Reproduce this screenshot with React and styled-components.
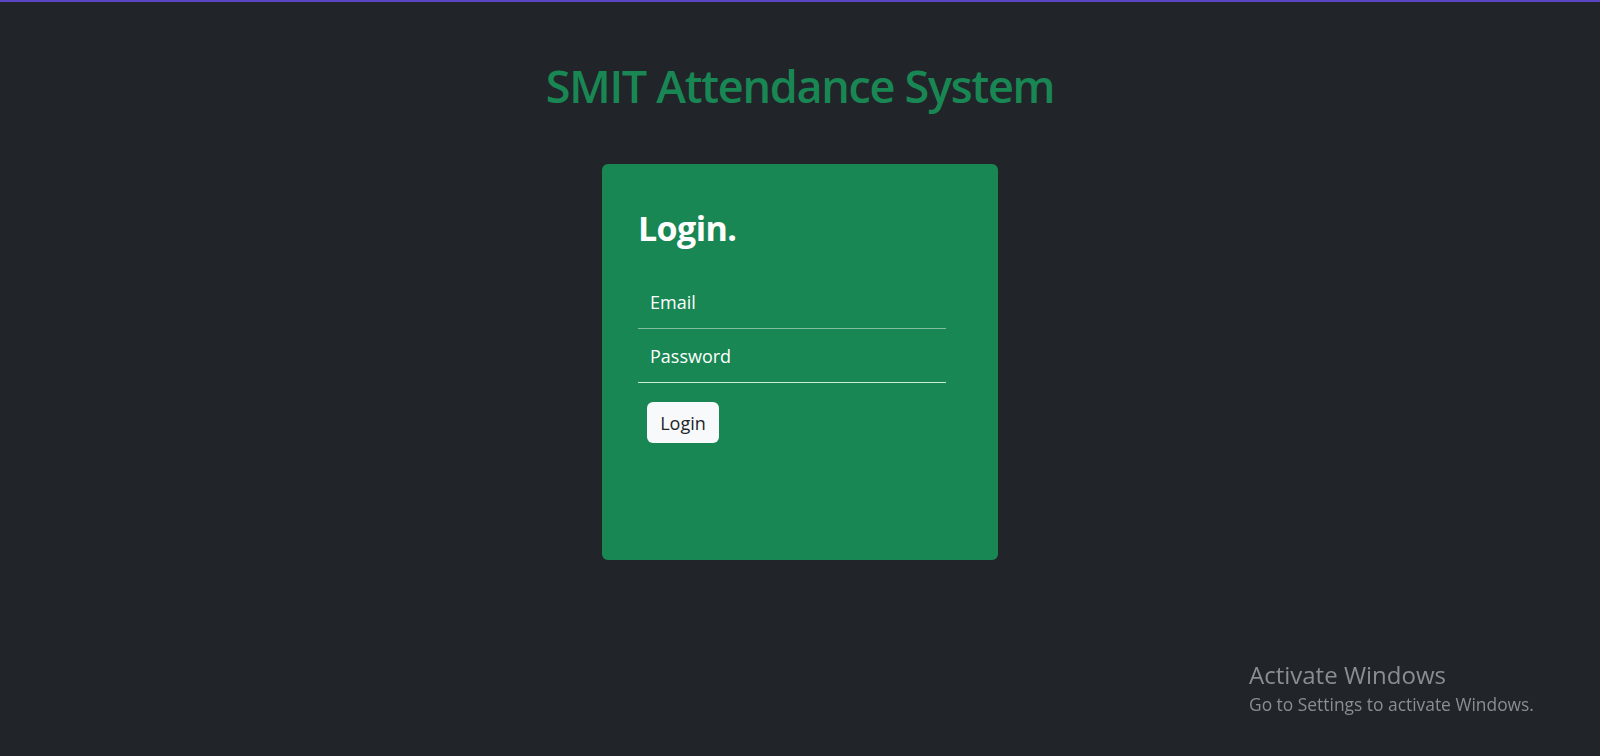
import React from "react";
import styled, { createGlobalStyle } from "styled-components";

const Global = createGlobalStyle`
  html, body { margin: 0; padding: 0; background: #212529; }
  body { font-family: "Open Sans", "Noto Sans", sans-serif; color: #fff; }
  * { box-sizing: border-box; }
`;

const Page = styled.div`
  min-height: 756px;
  display: flex;
  flex-direction: column;
  align-items: center;
  border-top: 2px solid #5a45c3;
`;

const Title = styled.h1`
  margin: 56px 0 0;
  font-size: 45px;
  line-height: 56px;
  font-weight: 600;
  color: #198754;
  letter-spacing: -1.3px;
`;

const Card = styled.div`
  margin-top: 50px;
  width: 396px;
  height: 396px;
  background: #198754;
  border-radius: 6px;
  padding: 38px 36px;
  display: flex;
  flex-direction: column;
  align-items: flex-start;
`;

const Heading = styled.h2`
  margin: 5px 0 0;
  font-size: 34px;
  line-height: 42px;
  font-weight: 700;
  letter-spacing: -0.6px;
  color: #fff;
`;

const Form = styled.form`
  margin-top: 26px;
  display: flex;
  flex-direction: column;
  align-items: flex-start;
`;

const Field = styled.input`
  width: 308px;
  height: 54px;
  padding: 0 12px;
  border: none;
  border-bottom: 1px solid ${(p) => p.$line};
  background: transparent;
  color: #fff;
  font-family: inherit;
  font-size: 18px;
  outline: none;
  &::placeholder { color: #fff; opacity: 1; }
`;

const Button = styled.button`
  margin: 19px 0 0 9px;
  width: 72px;
  height: 41px;
  border: none;
  border-radius: 6px;
  background: #f8f9fa;
  color: #212529;
  font-family: inherit;
  font-size: 18px;
  padding: 0;
  cursor: pointer;
`;

const Watermark = styled.div`
  position: fixed;
  left: 1249px;
  top: 660px;
  color: #8a8d91;
  font-family: "Open Sans", sans-serif;
  line-height: 1.25;
`;

const WmTitle = styled.div`
  font-size: 24px;
`;

const WmSub = styled.div`
  font-size: 17.4px;
  margin-top: 4px;
`;

export default function App() {
  return (
    <>
      <Global />
      <Page>
        <Title>SMIT Attendance System</Title>
        <Card>
          <Heading>Login.</Heading>
          <Form onSubmit={(e) => e.preventDefault()}>
            <Field type="email" placeholder="Email" $line="rgba(255,255,255,0.45)" />
            <Field type="password" placeholder="Password" $line="#c9efd9" />
            <Button type="submit">Login</Button>
          </Form>
        </Card>
      </Page>
      <Watermark>
        <WmTitle>Activate Windows</WmTitle>
        <WmSub>Go to Settings to activate Windows.</WmSub>
      </Watermark>
    </>
  );
}
